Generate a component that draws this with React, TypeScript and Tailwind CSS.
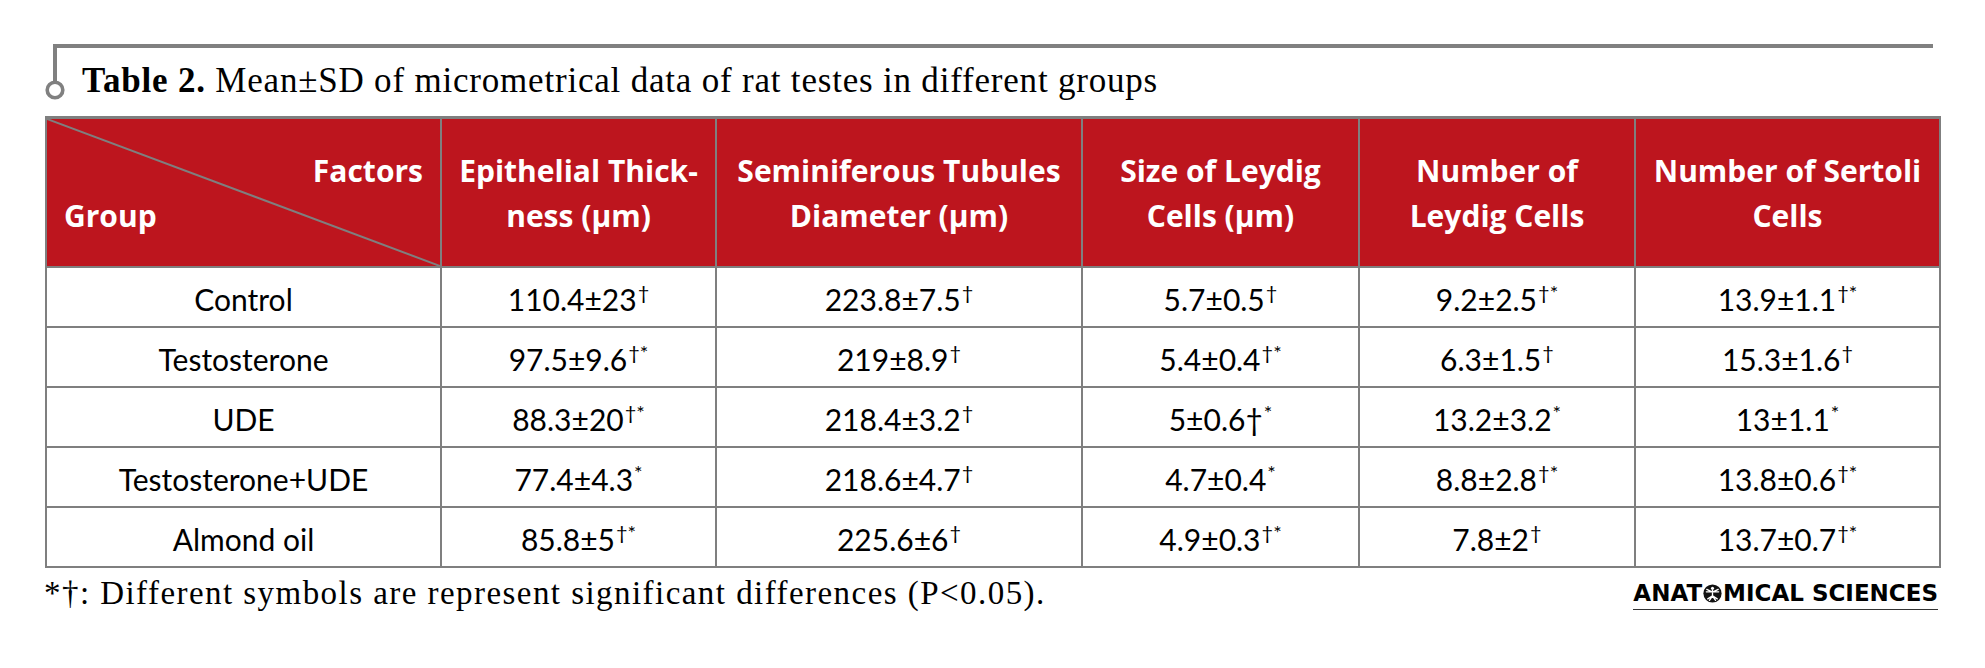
import React from "react";

const serif = { fontFamily: '"Liberation Serif", "Times New Roman", serif' };
const sans = { fontFamily: 'Lato, "Open Sans", sans-serif' };
const headSans = { fontFamily: '"Open Sans", Lato, sans-serif' };

type Cell = { v: string; sup?: string; mid?: string };

const rows: { g: string; c: Cell[] }[] = [
  {
    g: "Control",
    c: [
      { v: "110.4±23", sup: "†" },
      { v: "223.8±7.5", sup: "†" },
      { v: "5.7±0.5", sup: "†" },
      { v: "9.2±2.5", sup: "†*" },
      { v: "13.9±1.1", sup: "†*" },
    ],
  },
  {
    g: "Testosterone",
    c: [
      { v: "97.5±9.6", sup: "†*" },
      { v: "219±8.9", sup: "†" },
      { v: "5.4±0.4", sup: "†*" },
      { v: "6.3±1.5", sup: "†" },
      { v: "15.3±1.6", sup: "†" },
    ],
  },
  {
    g: "UDE",
    c: [
      { v: "88.3±20", sup: "†*" },
      { v: "218.4±3.2", sup: "†" },
      { v: "5±0.6", mid: "†", sup: "*" },
      { v: "13.2±3.2", sup: "*" },
      { v: "13±1.1", sup: "*" },
    ],
  },
  {
    g: "Testosterone+UDE",
    c: [
      { v: "77.4±4.3", sup: "*" },
      { v: "218.6±4.7", sup: "†" },
      { v: "4.7±0.4", sup: "*" },
      { v: "8.8±2.8", sup: "†*" },
      { v: "13.8±0.6", sup: "†*" },
    ],
  },
  {
    g: "Almond oil",
    c: [
      { v: "85.8±5", sup: "†*" },
      { v: "225.6±6", sup: "†" },
      { v: "4.9±0.3", sup: "†*" },
      { v: "7.8±2", sup: "†" },
      { v: "13.7±0.7", sup: "†*" },
    ],
  },
];

const headers: [string, string][] = [
  ["Epithelial Thick-", "ness (µm)"],
  ["Seminiferous Tubules", "Diameter (µm)"],
  ["Size of Leydig", "Cells (µm)"],
  ["Number of", "Leydig Cells"],
  ["Number of Sertoli", "Cells"],
];

function Vitruvian() {
  return (
    <svg width="19" height="19" viewBox="0 0 20 20" className="inline-block mx-[1px]">
      <circle cx="10" cy="10" r="9.6" fill="#111" />
      <circle cx="10" cy="4.6" r="1.6" fill="#fff" />
      <path d="M10 6.4 L10 12.5 M3.5 8.2 L16.5 8.2 M4 5.6 L10 8.6 L16 5.6 M10 12.5 L6.8 17.2 M10 12.5 L13.2 17.2 M10 12.5 L5 15.6 M10 12.5 L15 15.6" stroke="#fff" strokeWidth="1.4" strokeLinecap="round" fill="none" />
    </svg>
  );
}

export default function App() {
  return (
    <div className="w-[1985px] h-[668px] bg-white overflow-hidden text-black">
      {/* Heading */}
      <div className="pt-[44px] pl-[53px]">
        <div className="w-[1880px] h-[72px] border-t-4 border-[#808080] flex items-start">
          <svg width="20" height="54" className="-ml-[8px] shrink-0" viewBox="0 0 20 54">
            <line x1="10" y1="0" x2="10" y2="33" stroke="#808080" strokeWidth="4" />
            <circle cx="10" cy="42" r="7.8" stroke="#808080" strokeWidth="3.6" fill="#fff" />
          </svg>
          <div className="ml-[17px] pt-[13px] text-[35px] leading-[40px] tracking-[0.8px] whitespace-nowrap" style={serif}>
            <span className="font-bold">Table 2.</span> Mean±SD of micrometrical data of rat testes in different groups
          </div>
        </div>
      </div>

      {/* Table */}
      <div
        className="ml-[45px] w-[1896px] grid grid-cols-[395px_275px_366px_277px_276px_305px] border-l-2 border-t-[3px] border-[#7f7f7f]"
        style={sans}
      >
        <div
          className="relative h-[149px] bg-[#bd151e] border-r-2 border-b-2 border-[#7f7f7f] flex flex-col justify-center px-[17px] text-white font-bold text-[30px] leading-[45px]"
          style={headSans}
        >
          <svg className="absolute inset-0 w-full h-full" preserveAspectRatio="none" viewBox="0 0 100 100">
            <line x1="0" y1="0" x2="100" y2="100" stroke="#7f7f7f" strokeWidth="2" vectorEffect="non-scaling-stroke" />
          </svg>
          <div className="relative text-right">Factors</div>
          <div className="relative text-left">Group</div>
        </div>
        {headers.map((h, i) => (
          <div
            key={i}
            className="h-[149px] bg-[#bd151e] border-r-2 border-b-2 border-[#7f7f7f] flex flex-col justify-center items-center text-center text-white font-bold text-[30px] leading-[45px] whitespace-nowrap"
            style={headSans}
          >
            <div>{h[0]}</div>
            <div>{h[1]}</div>
          </div>
        ))}
        {rows.map((r, ri) => (
          <React.Fragment key={ri}>
            <div className="h-[60px] border-r-2 border-b-2 border-[#7f7f7f] flex items-center justify-center pt-[4px] text-[30px] leading-[36px] whitespace-nowrap">
              {r.g}
            </div>
            {r.c.map((c, ci) => (
              <div
                key={ci}
                className="h-[60px] border-r-2 border-b-2 border-[#7f7f7f] flex items-center justify-center pt-[4px] text-[30px] leading-[36px] whitespace-nowrap"
              >
                <span>
                  {c.v}
                  {c.mid}
                  {c.sup && (
                    <span className="text-[20px] relative -top-[11px] leading-none ml-[1px]">{c.sup}</span>
                  )}
                </span>
              </div>
            ))}
          </React.Fragment>
        ))}
      </div>

      {/* Footer */}
      <div className="ml-[44px] w-[1894px] flex justify-between items-start">
        <div className="mt-[7px] text-[33px] leading-[36px] tracking-[1.45px] whitespace-nowrap" style={serif}>
          *†: Different symbols are represent significant differences (P&lt;0.05).
        </div>
        <div
          className="mt-[13px] pb-[4px] border-b-[1.5px] border-[#333] text-[23px] leading-[24px] font-bold whitespace-nowrap flex items-center"
          style={{ fontFamily: '"DejaVu Sans", sans-serif' }}
        >
          <span>ANAT</span>
          <Vitruvian />
          <span>MICAL SCIENCES</span>
        </div>
      </div>
    </div>
  );
}
